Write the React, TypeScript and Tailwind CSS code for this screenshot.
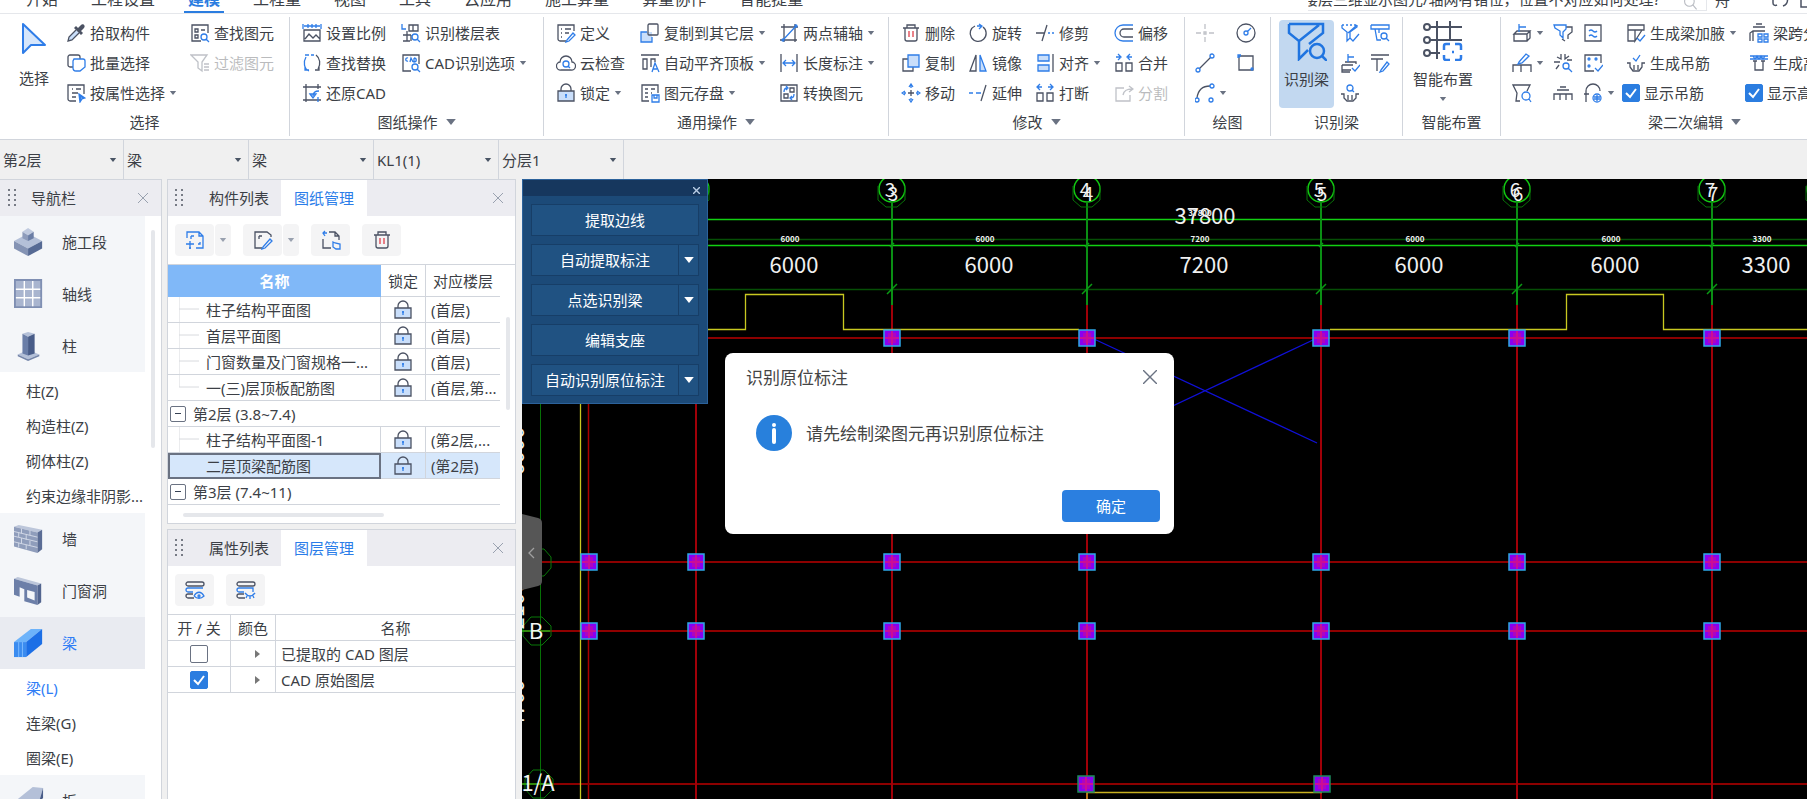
import { useState, type ReactNode } from "react"
import clsx from "clsx"

const INK = "#4b5263"
const BLUE = "#2f7de8"
const SOFT = "#c9defa"

// circle as a path, so that it can share one stroke with the lines around it
const c = (x: number, y: number, r: number) => `M${x - r} ${y}a${r} ${r} 0 1 0 ${r * 2} 0a${r} ${r} 0 1 0 ${-r * 2} 0`

type Glyph = { fill?: string; ink?: string; blue?: string; red?: string }

const glyphs: Record<string, Glyph> = {
  batch: { ink: "M7 14H4a2 2 0 0 1-2-2V4a2 2 0 0 1 2-2h8a2 2 0 0 1 2 2v2", blue: "M8 6h9a2 2 0 0 1 2 2v6l-5 4h-4a3 3 0 0 1-3-3V8z" },
  byProp: { ink: "M10 18H4a2 2 0 0 1-2-2V2h16v9M6 6h1M10 6h5M6 10h6M6 14h4", blue: "M13 11l6 4-3 1-2 3zM14 13l3 2-2 2z" },
  find: { ink: "M11 18H2V2h16v8M5 6h3v3H5zM5 12h3v3H5zM11 7h4", blue: c(14, 14, 3) + "M16 16l3 3" },
  filter: { ink: "M1 2h16l-5 7v9l-4-3V9zM14 11h5M14 14h5M14 17h5" },
  scale: { ink: "M2 7h16v11H2zM3 16l4-5 4 4 3-3 4 4", blue: "M1 1v5M19 1v5M2 3h16M6 1v4M10 1v4M14 1v4" },
  replace: { ink: "M14 2c4 3 5 9 2 14M13 17h4v-4", blue: "M7 18C2 16 1 9 4 4M7 2H3M3 14v3h4M12 2H9" },
  restore: { ink: "M1 4h18M4 1v18M1 17h18M16 1v5", blue: "M17 8c-5 0-6 2-6 5M8 11l3 4 3-4zM16 14v5" },
  floors: { ink: "M8 2h9v6H8zM12 2v6M2 12h8M6 8v10M2 18h7M10 12v6", blue: "M1 1v5h4" + c(14, 14, 3) + "M16 16l3 3" },
  cad: { ink: "M10 18H2V2h16v9", blue: "M7 5c-3-1-3 4 0 3M9 9l1-4 2 4M13 5v4c3 0 3-4 0-4" + c(14, 14, 3) + "M16 16l3 3" },
  define: { ink: "M10 18H4a2 2 0 0 1-2-2V2h16v6M5 6h1M9 6h6M5 10h1M9 10h4M5 14h1", blue: "M11 17l6-7 2 2-6 6-3 1z" },
  cloud: { ink: "M5 17a4 4 0 0 1-1-8 6 6 0 0 1 12 0 4 4 0 0 1-1 8z", blue: c(10, 11, 3) + "M12 13l2 2" },
  lock: { fill: "M2 8h16v10H2z", ink: "M2 8h16v10H2zM5 8V6a5 5 0 0 1 10 0v2", blue: "M10 11v4M9 12h2" },
  copyFloor: { fill: "M1 9h11v10H1z", blue: "M7 9H1v10h11v-5", ink: "M9 1h8a1 1 0 0 1 1 1v9a1 1 0 0 1-1 1H9a1 1 0 0 1-1-1V2z" },
  alignTop: { ink: "M1 2h18M3 6h4v10H3zM11 14V6h4v3", blue: "M12 19l3-9 4 9M13 16h4" },
  save: { ink: "M9 18H2V2h16v8M5 6h3M11 6h4M5 10h3M5 14h3M11 10h1", blue: "M12 12h7v7h-7zM14 12v3h3v-3" },
  twoPoint: { ink: "M5 1v18M16 1v18M2 4h17M1 17h17", blue: "M4 17L17 3" + c(17, 3, 1) + c(4, 17, 1) },
  length: { ink: "M2 1v18M18 1v18", blue: "M4 10h12M7 7l-3 3 3 3M13 7l3 3-3 3" },
  convert: { ink: "M2 2h16v16H2zM11 5h4v4h-4zM5 11h4v4H5z", blue: "M5 9c0-3 1-4 3-4M7 3l2 2-2 2M15 11c0 3-1 4-3 4M13 13l-2 2 2 2" },
  trash: { ink: "M2 5h16M4 5v11a2 2 0 0 0 2 2h8a2 2 0 0 0 2-2V5M6 5V2h8v3", red: "M8 8v6M12 8v6" },
  copy: { ink: "M7 6H2v12h10v-4", fill: "M7 2h11v12H7z", blue: "M7 2h11v12H7z" },
  move: { ink: "M10 7v6M7 10h6", blue: "M8 4l2-3 2 3M8 16l2 3 2-3M4 8l-3 2 3 2M16 8l3 2-3 2M10 3v2M10 15v2M3 10h2M15 10h2" },
  rotate: { ink: "M7 3a8 8 0 1 0 8 1", blue: "M11 1l3 2-3 3M9 3h4" },
  mirror: { ink: "M8 2v16H2z", fill: "M12 2v16h6z", blue: "M12 2v16h6z" },
  extend: { ink: "M18 2l-5 16", blue: "M1 10h4M8 10h5" },
  trim: { ink: "M12 2L7 18M1 10h9", blue: "M13 10h2M17 10h2" },
  align: { fill: "M3 2h11v6H3zM3 12h11v6H3z", blue: "M3 2h11v6H3zM3 12h11v6H3z", ink: "M18 1v18" },
  breakUp: { ink: "M2 10h6v8H2zM12 10h6v8h-6z", blue: "M3 4h4M5 1L2 4l3 3M13 4h4M15 1l3 3-3 3" },
  offset: { blue: "M19 2H9a8 8 0 0 0 0 16h10", ink: "M19 6h-9a4 4 0 0 0 0 8h9" },
  merge: { ink: "M2 10h6v8H2zM12 10h6v8h-6z", blue: "M2 4h4M4 1l3 3-3 3M14 4h4M16 1l-3 3 3 3" },
  split: { ink: "M10 5H2v13h14v-6M9 12c1-5 4-6 9-6M15 3l4 3-4 3" },
  point: { ink: "M10 1v5M10 14v5M1 10h5M14 10h5M9 9h2v2H9z" },
  circle: { ink: c(10, 10, 9), blue: c(10, 10, 2) + "M11 9l4-4" },
  line: { ink: "M4 16L16 4", blue: c(3, 17, 2) + c(17, 3, 2) },
  rect: { ink: "M3 3h14v14H3z", blue: "M2 5V2h3" + c(16, 16, 1) + c(3, 3, 1) },
  arc: { ink: "M2 15C3 7 8 3 15 3", blue: c(17, 3, 2) + c(2, 17, 2) + c(16, 17, 2) },
  beamCheck: { blue: "M2 2h2M6 2h2M10 2h2M14 2h2M2 2v3l5 4v9l3-3V9l7-5V2M17 2L8 10M10 15l3 3 6-7" },
  beamFind: { blue: "M1 2h18v4H5l2 11h4M1 2v4h4M9 6v4" + c(14, 13, 3) + "M16 15l3 3" },
  levelCheck: { ink: "M2 12h11M2 12v5h9M5 9h11v2M2 17v2h8", blue: "M8 1v8M8 4h6M12 15l3 3 5-6" },
  sectionEdit: { ink: "M1 2h18M1 6h12M7 6v12", blue: "M11 17l6-8 2 2-6 7-3 1z" },
  hangFind: { ink: "M1 11h3v4l3 3h6l3-3v-4h3M8 12v5M12 12v5", blue: c(10, 5, 3) + "M12 7l2 2" },
  level: { ink: "M2 11l3-3h13l-3 3zM2 11v7h13v-7M18 8v7l-3 3", blue: "M7 1v8M7 4h7" },
  penBeam: { ink: "M1 19v-7h18v7M9 12v7", blue: "M7 9l7-8 3 2-7 7-4 1z" },
  cutFind: { ink: "M8 18H4l1-8-4-8h17l-3 6", blue: c(14, 13, 4) + "M17 16l2 3" },
  twoBeam: { blue: "M1 2h12v4l-3 3v6l-3-3V8L2 5z", ink: "M13 4h6v5l-4 3v4M9 16l3 2" },
  explode: { ink: "M8 1v5L4 4M1 9h6M12 1v5l4-3M14 7h5M6 12l-3 4", blue: c(13, 13, 3) + "M15 15l4 4" },
  roof: { ink: "M1 17v-6h18v6M7 11v6M13 11v6M4 7h12M7 4h6" },
  equalBox: { ink: "M2 2h16v16H2z", blue: "M6 8q2-2 4 0t4 0M6 13q2-2 4 0t4 0" },
  dots: { ink: "M11 18H2V2h16v8", blue: c(6, 6, 1) + c(13, 6, 1) + c(6, 13, 1) + "M12 15l3 3 5-6" },
  headset: { ink: "M3 11V8a7 7 0 0 1 14 0M1 11h5M3 11v8", blue: c(14, 15, 4) + "M11 14h6M11 16h6M14 12v6" },
  haunch: { ink: "M2 2h16v5H2zM2 2v16h7M9 7v11l7-11", blue: "M11 15l3 3 5-6" },
  hang: { ink: "M1 10h3v4l3 4h6l3-4v-4h3M8 12v5M12 12v5", blue: "M7 5l3 3 4-6" },
  spans: { ink: "M1 18v-8l3-2h12M4 4h12M7 1h6M4 8v10", blue: "M9 11h4v3H9zM15 11h4v3h-4zM9 16h4v3H9zM15 16h4v3h-4z" },
  raised: { blue: "M1 3h18M1 6h18M4 3l2 3 2-3 2 3 2-3 2 3 2-3", ink: "M6 8v9h8V8M4 8h4M12 8h4" },
  newSheet: { blue: "M6 18H4M2 8V2h12l4 4v12h-7M14 2v4h4M6 6h3M6 6v3M13 14h2v-2M1 14h8M5 11v8" },
  editSheet: { ink: "M9 18H2V2h12l4 3v2M6 6v3M6 6h3", blue: "M10 17l7-8 2 2-7 7-3 1z" },
  moveSheet: { ink: "M2 9v9h8M8 2h6l4 4v4M14 2v4h4", blue: "M4 1L2 3l2 3M2 3h4M12 12v5l3 2h4v-5l-5-1z" },
  layerOn: { ink: "M3 2h14a1 1 0 0 1 0 4H3a1 1 0 0 1 0-4M9 18H3a1 1 0 0 1 0-4h5", blue: "M8 12H3a1 1 0 0 1 0-4h15M9 16c3-5 7-5 10 0-3 3-7 3-10 0" + c(14, 16, 1) },
  layerOff: { ink: "M3 2h14a1 1 0 0 1 0 4H3a1 1 0 0 1 0-4M9 18H3a1 1 0 0 1 0-4h5", blue: "M8 12H3a1 1 0 0 1 0-4h14v4M9 13c3 4 7 4 10 0M11 16l-1 2M14 16v3M17 16l1 2" },
  search: { ink: c(8, 8, 6) + "M12 12l5 6" },
}

function Icon({ name, className = "h-5 w-5" }: { name: string; className?: string }) {
  if (name === "picker") {
    return (
      <svg viewBox="0 0 20 20" className={clsx(className, "shrink-0")} aria-hidden="true">
        <path d="M10 7L3 14l-1 4 4-1 7-7" fill={SOFT} stroke={INK} strokeWidth="1.300" />
        <path d="M8 5l7 7 2-2-2-2 3-3c2-2-1-5-3-3l-3 3-2-2z" fill={INK} />
      </svg>
    )
  }
  const g = glyphs[name]
  return (
    <svg viewBox="0 0 20 20" fill="none" strokeWidth="1.300" className={clsx(className, "shrink-0")} aria-hidden="true">
      {g.fill && <path d={g.fill} fill={SOFT} />}
      {g.ink && <path d={g.ink} stroke={INK} />}
      {g.blue && <path d={g.blue} stroke={BLUE} />}
      {g.red && <path d={g.red} stroke="#e0404c" />}
    </svg>
  )
}

function Caret({ className = "text-gray-500", large }: { className?: string; large?: boolean }) {
  return (
    <svg viewBox="0 0 8 5" className={clsx("shrink-0", large ? "h-[6px] w-[10px]" : "h-1 w-2", className)} aria-hidden="true">
      <path d="M0 0h8L4 5z" fill="currentColor" />
    </svg>
  )
}

function Cross({ className, bold }: { className: string; bold?: boolean }) {
  return (
    <svg viewBox="0 0 10 10" className={className} aria-hidden="true">
      <path d="M0 0l10 10M10 0L0 10" stroke="currentColor" strokeWidth={bold ? 2 : 1} />
    </svg>
  )
}

function CheckBox({ id, label, checked = false }: { id: string; label: string; checked?: boolean }) {
  const [on, setOn] = useState(checked)
  return (
    <span className="relative block h-[18px] w-[18px] shrink-0">
      <input
        id={id}
        type="checkbox"
        aria-label={label}
        checked={on}
        onChange={() => setOn(!on)}
        className="block h-[18px] w-[18px] appearance-none rounded-xs border border-gray-500 bg-white checked:border-[#2b7de0] checked:bg-[#2b7de0]"
      />
      {on && (
        <svg viewBox="0 0 18 18" className="pointer-events-none absolute inset-0" aria-hidden="true">
          <path d="M4 9l4 4 6-8" fill="none" stroke="white" strokeWidth="2" />
        </svg>
      )}
    </span>
  )
}

type ToolDef = { icon: string; text?: string; menu?: boolean; off?: boolean; check?: boolean }

function Tool({ icon, text, menu, off, check }: ToolDef) {
  if (check) {
    return (
      <label htmlFor={icon} className="-ml-1 flex h-[30px] items-center gap-1 whitespace-nowrap">
        <CheckBox id={icon} label={text ?? ""} checked />
        {text}
      </label>
    )
  }
  return (
    <button disabled={off} aria-label={text ?? icon} className={clsx("flex h-[30px] items-center gap-1 whitespace-nowrap", off && "opacity-35")}>
      <Icon name={icon} />
      {text}
      {menu && <Caret />}
    </button>
  )
}

function Column({ tools, className }: { tools: ToolDef[]; className?: string }) {
  return (
    <div className={clsx("flex shrink-0 flex-col items-start", className)}>
      {tools.map((t) => (
        <Tool key={t.icon} {...t} />
      ))}
    </div>
  )
}

type GroupProps = { title: string; menu?: boolean; className: string; inset: string; children: ReactNode }

function Group({ title, menu, className, inset, children }: GroupProps) {
  return (
    <section className={clsx("my-[3px] flex shrink-0 flex-col border-r border-gray-300", className)}>
      <div className={clsx("flex h-[91px] pt-px", inset)}>{children}</div>
      <div className="flex h-7 items-center justify-center gap-2">
        {title}
        {menu && <Caret large />}
      </div>
    </section>
  )
}

const tabs = ["开始", "工程设置", "建模", "工程量", "视图", "工具", "云应用", "施工算量", "算量协作", "智能提量"]

function TopBar() {
  return (
    <header className="flex h-[14px] shrink-0 items-end overflow-hidden border-b border-gray-200 pl-[26px]">
      <nav className="flex gap-[33px] text-[16px]">
        {tabs.map((t) => (
          <a key={t} href="#" className={clsx("relative block pb-[2px] leading-6 whitespace-nowrap", t === "建模" && "font-bold text-[#2b7de0]")}>
            {t}
            {t === "建模" && <span className="absolute -inset-x-1 bottom-0 h-[2px] bg-[#2b7de0]" />}
          </a>
        ))}
      </nav>
      <div className="ml-auto flex w-[499px] shrink-0 items-end gap-2">
        <div className="relative mb-[2px] w-[399px]">
          <input
            aria-label="搜索"
            defaultValue="楼层三维显示图元/轴网有错位，位置不对应如何处理?"
            className="block h-[25px] w-full -indent-[5px] border-r border-b border-gray-200 pr-10 outline-none"
          />
          <span className="absolute right-2 bottom-0 opacity-40">
            <Icon name="search" className="h-4 w-4" />
          </span>
        </div>
        <span className="pb-px leading-6">舟</span>
        <svg viewBox="0 0 40 14" className="mb-1 ml-auto h-[14px] w-10" fill="none" stroke={INK} strokeWidth="1.500" aria-hidden="true">
          <path d="M6 2v6c0 2 2 3 4 2M16 1c6 0 6 8 0 10M40 12h-6V1" />
        </svg>
      </div>
    </header>
  )
}

function Ribbon() {
  return (
    <div className="flex shrink-0 overflow-hidden border-b border-gray-300">
      <Group title="选择" className="w-[290px]" inset="pl-[10px]">
        <button className="mr-2 flex w-12 flex-col items-center gap-3">
          <svg viewBox="0 0 26 34" className="mt-1 h-[34px] w-[26px]" aria-hidden="true">
            <path d="M2 2v29l8-8h14z" fill="#d6e6fb" stroke={BLUE} strokeWidth="2" strokeLinejoin="round" />
          </svg>
          选择
        </button>
        <Column className="w-[124px]" tools={[{ icon: "picker", text: "拾取构件" }, { icon: "batch", text: "批量选择" }, { icon: "byProp", text: "按属性选择", menu: true }]} />
        <Column tools={[{ icon: "find", text: "查找图元" }, { icon: "filter", text: "过滤图元", off: true }]} />
      </Group>
      <Group title="图纸操作" menu className="w-[254px]" inset="pl-3">
        <Column className="w-[99px]" tools={[{ icon: "scale", text: "设置比例" }, { icon: "replace", text: "查找替换" }, { icon: "restore", text: "还原CAD" }]} />
        <Column tools={[{ icon: "floors", text: "识别楼层表" }, { icon: "cad", text: "CAD识别选项", menu: true }]} />
      </Group>
      <Group title="通用操作" menu className="w-[345px]" inset="pl-3">
        <Column className="w-[84px]" tools={[{ icon: "define", text: "定义" }, { icon: "cloud", text: "云检查" }, { icon: "lock", text: "锁定", menu: true }]} />
        <Column
          className="w-[139px]"
          tools={[{ icon: "copyFloor", text: "复制到其它层", menu: true }, { icon: "alignTop", text: "自动平齐顶板", menu: true }, { icon: "save", text: "图元存盘", menu: true }]}
        />
        <Column tools={[{ icon: "twoPoint", text: "两点辅轴", menu: true }, { icon: "length", text: "长度标注", menu: true }, { icon: "convert", text: "转换图元" }]} />
      </Group>
      <Group title="修改" menu className="w-[296px]" inset="pl-3">
        <Column className="w-[67px]" tools={[{ icon: "trash", text: "删除" }, { icon: "copy", text: "复制" }, { icon: "move", text: "移动" }]} />
        <Column className="w-[67px]" tools={[{ icon: "rotate", text: "旋转" }, { icon: "mirror", text: "镜像" }, { icon: "extend", text: "延伸" }]} />
        <Column className="w-[79px]" tools={[{ icon: "trim", text: "修剪" }, { icon: "align", text: "对齐", menu: true }, { icon: "breakUp", text: "打断" }]} />
        <Column tools={[{ icon: "offset", text: "偏移" }, { icon: "merge", text: "合并" }, { icon: "split", text: "分割", off: true }]} />
      </Group>
      <Group title="绘图" className="w-[86px]" inset="pl-[10px]">
        <Column className="w-[41px]" tools={[{ icon: "point", off: true }, { icon: "line" }, { icon: "arc", menu: true }]} />
        <Column tools={[{ icon: "circle" }, { icon: "rect" }]} />
      </Group>
      <Group title="识别梁" className="w-[132px]" inset="pl-2">
        <button className="mt-[2px] mr-[6px] flex h-[88px] w-[55px] shrink-0 flex-col items-center gap-2 rounded bg-[#c2d8f0]">
          <svg viewBox="0 0 40 40" className="mt-px h-10 w-10" fill="none" stroke="#1f74e0" strokeWidth="2.500" aria-hidden="true">
            <path d="M2 3h34v9L22 23M2 3v9l10 8v18l9-9M12 20L32 4" />
            <circle cx="30" cy="30" r="7" fill="#c2d8f0" />
            <path d="M35 35l5 5" />
          </svg>
          识别梁
        </button>
        <Column className="w-[30px]" tools={[{ icon: "beamCheck" }, { icon: "levelCheck" }, { icon: "hangFind" }]} />
        <Column tools={[{ icon: "beamFind" }, { icon: "sectionEdit" }]} />
      </Group>
      <Group title="智能布置" className="w-[98px]" inset="pl-[6px]">
        <button className="flex w-[68px] flex-col items-center gap-2">
          <svg viewBox="0 0 40 40" className="mt-[3px] h-10 w-10" fill="none" stroke={INK} strokeWidth="2" aria-hidden="true">
            <path d="M6 6h33M6 19h33M6 32h11M14 0v38M27 0v19" />
            <circle cx="4" cy="6" r="3" fill="white" />
            <circle cx="4" cy="19" r="3" fill="white" />
            <circle cx="4" cy="32" r="3" fill="white" />
            <path d="M21 29v-4q0-2 2-2h4M32 23h4q2 0 2 2v4M38 34v3q0 2-2 2h-4M27 39h-4q-2 0-2-2v-3M29 31h2" stroke={BLUE} strokeWidth="2.500" />
          </svg>
          <span className="whitespace-nowrap">智能布置</span>
          <Caret />
        </button>
      </Group>
      <Group title="梁二次编辑" menu className="w-[388px]" inset="pl-[11px]">
        <Column className="w-[41px]" tools={[{ icon: "level", menu: true }, { icon: "penBeam", menu: true }, { icon: "cutFind" }]} />
        <Column className="w-[30px]" tools={[{ icon: "twoBeam" }, { icon: "explode" }, { icon: "roof" }]} />
        <Column className="w-[43px]" tools={[{ icon: "equalBox" }, { icon: "dots" }, { icon: "headset", menu: true }]} />
        <Column className="w-[123px]" tools={[{ icon: "haunch", text: "生成梁加腋", menu: true }, { icon: "hang", text: "生成吊筋" }, { icon: "show-hang", text: "显示吊筋", check: true }]} />
        <Column tools={[{ icon: "spans", text: "梁跨分类" }, { icon: "raised", text: "生成高强节点" }, { icon: "show-raised", text: "显示高强节点", check: true }]} />
      </Group>
    </div>
  )
}

const filters = [
  { label: "楼层", value: "第2层" },
  { label: "构件大类", value: "梁" },
  { label: "构件类型", value: "梁" },
  { label: "构件", value: "KL1(1)" },
  { label: "分层", value: "分层1" },
]

function FilterBar() {
  return (
    <div className="flex h-[39px] shrink-0 bg-[#f0f0f0]">
      {filters.map((f, i) => (
        <div key={f.label} className={clsx("relative border-r border-gray-300", i === 0 ? "w-[124px]" : "w-[125px]")}>
          <select aria-label={f.label} className="h-full w-full appearance-none pl-[3px] outline-none">
            <option>{f.value}</option>
          </select>
          <Caret className="pointer-events-none absolute top-[18px] right-[6px] text-gray-600" />
        </div>
      ))}
    </div>
  )
}

function Grip() {
  return (
    <svg viewBox="0 0 8 18" className="h-[18px] w-2" fill="#777b85" aria-hidden="true">
      {[0, 5, 10, 15].map((y) => (
        <path key={y} d={`M0 ${y}h2v2H0zM6 ${y}h2v2H6z`} />
      ))}
    </svg>
  )
}

// steel-blue solids used by the component tree
const solids: Record<string, ReactNode> = {
  stage: (
    <>
      <path d="M0 15L15 7l15 8-15 8z" fill="#b4c0d8" />
      <path d="M0 15l15 8v8L0 23z" fill="#8493b4" />
      <path d="M30 15l-15 8v8l15-8z" fill="#566a94" />
      <path d="M9 5l6-4 6 4-6 4z" fill="#c0cadf" />
      <path d="M9 5l6 4v6l-6-3z" fill="#8d9bbb" />
      <path d="M21 5l-6 4v6l6-3z" fill="#6a7da5" />
    </>
  ),
  axis: (
    <>
      <path d="M1 1h28v29H1z" fill="#a9b5cf" stroke="#7f8fb3" strokeWidth="2" />
      <path d="M11 2v27M20 2v27M2 11h26M2 20h26" stroke="white" strokeWidth="1.500" />
    </>
  ),
  column: (
    <>
      <path d="M4 25l11-5 12 5-12 5z" fill="#b4c0d8" />
      <path d="M4 25l11 5v2L4 27zM27 25l-12 5v2l12-5z" fill="#7485a9" />
      <path d="M9 3l6-2 7 2-7 3z" fill="#b4c0d8" />
      <path d="M9 3l6 3v20l-6-2z" fill="#6a7ea8" />
      <path d="M22 3l-7 3v20l7-2z" fill="#485c88" />
    </>
  ),
  wall: (
    <>
      <path d="M0 3l5-2 25 5-5 3z" fill="#bcc6da" />
      <path d="M0 3l25 6v22L0 24z" fill="#8f9dbb" />
      <path d="M30 6l-5 3v22l5-4z" fill="#5b6d95" />
      <path d="M0 8l25 6M0 13l25 6M0 19l25 6M8 5v5M17 7v5M5 9v5M13 11v6M8 15v6M17 18v5M5 20v5M13 22v5" stroke="#d3dae8" />
    </>
  ),
  opening: (
    <>
      <path d="M0 3l4-2 25 7-4 2z" fill="#bcc6da" />
      <path d="M0 3l25 7v21l-14-4V14l-5-2v10l-6-2zM14 15v8l8 3v-9z" fill="#6c7fa8" fillRule="evenodd" />
      <path d="M29 8l-4 2v21l4-3z" fill="#52658f" />
    </>
  ),
  beam: (
    <>
      <path d="M0 15L18 1h12L13 15z" fill="#6db3fa" />
      <path d="M0 15h13v16H0z" fill="#3b8cf0" />
      <path d="M30 1L13 15v16l17-14z" fill="#1c6fe6" />
      <path d="M5 15v16M9 15v16" stroke="#7fbcff" />
    </>
  ),
  slab: (
    <>
      <path d="M4 14L20 1l11 1-4 14z" fill="#b4c0d8" />
      <path d="M4 14l23 2v6L4 20z" fill="#8493b4" />
      <path d="M31 2l-4 14v6l4-10z" fill="#485c88" />
    </>
  ),
}

function NavItem({ icon, text, active }: { icon: string; text: string; active?: boolean }) {
  return (
    <a href="#" className={clsx("flex h-[52px] items-center gap-[18px] pl-[14px]", active ? "bg-[#e9ebf1] text-[#2f7df6]" : "bg-[#f4f6f9]")}>
      <svg viewBox="0 0 32 32" className="h-8 w-[30px]" aria-hidden="true">
        {solids[icon]}
      </svg>
      {text}
    </a>
  )
}

function SubItems({ items, active }: { items: string[]; active?: string }) {
  return (
    <div className="pt-px">
      {items.map((s) => (
        <a key={s} href="#" className={clsx("flex h-[35px] items-center pl-[26px] whitespace-nowrap", s === active && "text-[#2f7df6]")}>
          {s}
        </a>
      ))}
    </div>
  )
}

function NavPanel() {
  return (
    <aside className="flex w-[162px] shrink-0 flex-col border-t border-r border-gray-300 bg-white">
      <div className="flex h-9 shrink-0 items-center bg-[#ececf1] pr-[13px] pl-2">
        <Grip />
        <h2 className="ml-[15px]">导航栏</h2>
        <button aria-label="关闭导航栏" className="ml-auto text-gray-400">
          <Cross className="h-[10px] w-[10px]" />
        </button>
      </div>
      <div className="flex min-h-0 flex-1 overflow-hidden">
        <nav className="w-[145px] shrink-0">
          <NavItem icon="stage" text="施工段" />
          <NavItem icon="axis" text="轴线" />
          <NavItem icon="column" text="柱" />
          <SubItems items={["柱(Z)", "构造柱(Z)", "砌体柱(Z)", "约束边缘非阴影..."]} />
          <NavItem icon="wall" text="墙" />
          <NavItem icon="opening" text="门窗洞" />
          <NavItem icon="beam" text="梁" active />
          <SubItems items={["梁(L)", "连梁(G)", "圈梁(E)"]} active="梁(L)" />
          <NavItem icon="slab" text="板" />
        </nav>
        <div className="mt-[14px] ml-[6px] h-[218px] w-1 rounded-full bg-gray-200" />
      </div>
    </aside>
  )
}

function PanelTabs({ items }: { items: [string, string] }) {
  return (
    <div className="flex h-9 shrink-0 items-center bg-[#ececf1] pr-3 pl-[7px]">
      <Grip />
      <div role="tablist" className="ml-[14px] flex h-full">
        <button role="tab" aria-selected="false" className="w-[84px]">
          {items[0]}
        </button>
        <button role="tab" aria-selected="true" className="w-[86px] bg-white text-[#2b7de9]">
          {items[1]}
        </button>
      </div>
      <button aria-label="关闭面板" className="ml-auto text-gray-400">
        <Cross className="h-[10px] w-[10px]" />
      </button>
    </div>
  )
}

function PanelButton({ icon, label, menu }: { icon: string; label: string; menu?: boolean }) {
  return (
    <span className="flex gap-px">
      <button aria-label={label} className="flex h-8 w-[39px] items-center justify-center rounded bg-[#f4f4f5]">
        <Icon name={icon} />
      </button>
      {menu && (
        <button aria-label={label + "菜单"} className="flex h-8 w-4 items-center justify-center rounded bg-[#f4f4f5]">
          <Caret className="text-gray-400" />
        </button>
      )}
    </span>
  )
}

type Sheet = { name: string; floor?: string; active?: boolean; last?: boolean }

const sheets: Sheet[] = [
  { name: "柱子结构平面图", floor: "(首层)" },
  { name: "首层平面图", floor: "(首层)" },
  { name: "门窗数量及门窗规格一...", floor: "(首层)" },
  { name: "一(三)层顶板配筋图", floor: "(首层,第...", last: true },
  { name: "第2层 (3.8~7.4)" },
  { name: "柱子结构平面图-1", floor: "(第2层,..." },
  { name: "二层顶梁配筋图", floor: "(第2层)", active: true },
  { name: "第3层 (7.4~11)" },
]

function SheetRow({ sheet }: { sheet: Sheet }) {
  if (!sheet.floor) {
    return (
      <tr>
        <td colSpan={3} className="h-[26px] border-b border-gray-300 p-0">
          <div className="flex items-center gap-[7px] pl-[2px]">
            <button aria-label={"折叠" + sheet.name} className="flex h-4 w-4 items-center justify-center rounded-xs border border-gray-500">
              <span className="h-px w-[6px] bg-gray-700" />
            </button>
            {sheet.name}
          </div>
        </td>
      </tr>
    )
  }
  return (
    <tr className={sheet.active ? "bg-[#d6e7fb]" : undefined}>
      <td className={clsx("h-[26px] p-0", sheet.active ? "border-2 border-gray-500" : "border-r border-b border-gray-300")}>
        <div className={clsx("flex items-center whitespace-nowrap", sheet.active ? "pl-9" : "pl-[11px]")}>
          {!sheet.active && (
            <svg viewBox="0 0 20 25" className="mr-[7px] h-[25px] w-5" fill="none" stroke="#d8dade" aria-hidden="true">
              <path d={sheet.last ? "M0 0V12H20" : "M0 0V25M0 12H20"} />
            </svg>
          )}
          {sheet.name}
        </div>
      </td>
      <td className="border-r border-b border-gray-300 p-0">
        <Icon name="lock" className="mx-auto block h-5 w-5" />
      </td>
      <td className="border-b border-gray-300 p-0 pl-[5px] whitespace-nowrap">{sheet.floor}</td>
    </tr>
  )
}

function DrawingPanel() {
  return (
    <section className="flex h-[345px] shrink-0 flex-col border border-gray-300 bg-white">
      <PanelTabs items={["构件列表", "图纸管理"]} />
      <div className="flex h-12 shrink-0 items-center gap-3 pl-[7px]">
        <PanelButton icon="newSheet" label="添加图纸" menu />
        <PanelButton icon="editSheet" label="编辑图纸" menu />
        <PanelButton icon="moveSheet" label="移动图纸" />
        <PanelButton icon="trash" label="删除图纸" />
      </div>
      <div className="flex border-t border-gray-300">
        <table className="w-[332px] table-fixed border-separate border-spacing-0 leading-5">
          <colgroup>
            <col className="w-[213px]" />
            <col className="w-[45px]" />
            <col className="w-[74px]" />
          </colgroup>
          <thead>
            <tr className="h-8">
              <th className="bg-[#80b8f8] p-0 text-white">名称</th>
              <th className="border-r border-b border-gray-300 p-0 font-normal">锁定</th>
              <th className="border-b border-gray-300 p-0 font-normal">对应楼层</th>
            </tr>
          </thead>
          <tbody>
            {sheets.map((s) => (
              <SheetRow key={s.name} sheet={s} />
            ))}
          </tbody>
        </table>
        <div className="mt-[52px] ml-[6px] h-[93px] w-1 rounded-full bg-gray-200" />
      </div>
      <div className="mt-2 ml-[15px] h-1 w-[201px] rounded-full bg-gray-200" />
    </section>
  )
}

const layers = [
  { id: "extracted", name: "已提取的 CAD 图层", on: false },
  { id: "original", name: "CAD 原始图层", on: true },
]

function LayerPanel() {
  return (
    <section className="flex min-h-0 flex-1 flex-col border border-b-0 border-gray-300 bg-white">
      <PanelTabs items={["属性列表", "图层管理"]} />
      <div className="flex h-12 shrink-0 items-center gap-3 pl-[7px]">
        <PanelButton icon="layerOn" label="显示图层" />
        <PanelButton icon="layerOff" label="隐藏图层" />
      </div>
      <table className="w-full table-fixed border-separate border-spacing-0 border-t border-gray-300 leading-5">
        <colgroup>
          <col className="w-[63px]" />
          <col className="w-[45px]" />
          <col />
        </colgroup>
        <thead>
          <tr className="h-[26px]">
            <th className="border-r border-b border-gray-300 p-0 font-normal">开 / 关</th>
            <th className="border-r border-b border-gray-300 p-0 font-normal">颜色</th>
            <th className="border-b border-gray-300 p-0 font-normal">名称</th>
          </tr>
        </thead>
        <tbody>
          {layers.map((l) => (
            <tr key={l.id} className="h-[26px]">
              <td className="border-r border-b border-gray-300 p-0">
                <div className="flex justify-center">
                  <CheckBox id={l.id} label={l.name} checked={l.on} />
                </div>
              </td>
              <td className="border-r border-b border-gray-300 p-0 pl-2">
                <svg viewBox="0 0 5 8" className="mx-auto block h-2 w-[5px]" aria-hidden="true">
                  <path d="M0 0l5 4-5 4z" fill="#777" />
                </svg>
              </td>
              <td className="border-b border-gray-300 p-0 pl-[5px]">
                <label htmlFor={l.id}>{l.name}</label>
              </td>
            </tr>
          ))}
        </tbody>
      </table>
    </section>
  )
}

const axes = [
  { x: 696, no: "2" },
  { x: 892, no: "3" },
  { x: 1087, no: "4" },
  { x: 1321, no: "5" },
  { x: 1517, no: "6" },
  { x: 1712, no: "7" },
  { x: 1820, no: "8" },
]
const spans = [
  { x: 794, mm: "6000" },
  { x: 989, mm: "6000" },
  { x: 1204, mm: "7200" },
  { x: 1419, mm: "6000" },
  { x: 1615, mm: "6000" },
  { x: 1766, mm: "3300" },
]

function Pillar({ x, y, edge = "#2ea8e8" }: { x: number; y: number; edge?: string }) {
  return (
    <g>
      <path d={`M${x - 8} ${y - 8}h16v16h-16z`} fill="#8a00f0" stroke={edge} strokeWidth="1.500" />
      <path d={`M${x} ${y - 7}v14M${x - 7} ${y}h14`} stroke="#c8109a" strokeWidth="2" />
      <path d={`M${x - 4} ${y - 5}h8v10h-8z`} fill="#d00a90" opacity="0.500" />
    </g>
  )
}

function Plan() {
  return (
    <svg viewBox="522 179 1285 620" preserveAspectRatio="xMinYMin slice" className="absolute inset-0 h-full w-full" fill="none" aria-label="二层顶梁配筋图">
      <path d="M522 219.500H1807M522 245.500H1807" stroke="#12d012" strokeWidth="1.500" />
      <path d="M522 239.500H1807M522 289.500H1807" stroke="#064f06" strokeWidth="1.500" />
      <path d="M540.500 400V799" stroke="#067006" />
      <path d="M588.500 337V799" stroke="#a80000" strokeWidth="1.500" />
      <path d="M522 338H1807M522 562H1807M522 784H1807" stroke="#8c0000" strokeWidth="2" />
      <path d="M522 631H1807" stroke="#c00000" strokeWidth="1.500" />
      {axes.map((a) => (
        <g key={a.no}>
          <path d={`M${a.x} 305V799`} stroke="#a00008" strokeWidth="2" />
          <path d={`M${a.x} 203V305`} stroke="#0a8f14" strokeWidth="2" />
          <path d={`M${a.x - 5} 294l10-10M${a.x - 2} 247l4-4`} stroke="#0a9a14" strokeWidth="1.500" />
          <circle cx={a.x} cy="189" r="13" stroke="#12c812" strokeWidth="1.500" />
          <path d={`M${a.x - 14} 186v14l8 7h11l8-7v-14`} stroke="#087008" />
          <g fill="#f2f2f2" textAnchor="middle" fontSize="19">
            <text x={a.x - 2} y="197">{a.no}</text>
            <text x={a.x + 1} y="201">{a.no}</text>
          </g>
        </g>
      ))}
      <path d="M580.500 329.500V799M580.500 329.500H745.500V294.500H843.500V329.500H1079M1330 329.500H1566.500V294.500H1663.500V329.500H1807" stroke="#c8c820" strokeWidth="1.300" />
      <path d="M1087 799V792.500H1322" stroke="#c8b020" strokeWidth="1.300" />
      <path d="M1094 339L1317 443M1313 340L1094 443" stroke="#1010d8" strokeWidth="1.300" />
      {spans.map((s) => (
        <g key={s.x} fill="#f0f0f0" textAnchor="middle">
          <text x={s.x} y="273" fontSize="22">{s.mm}</text>
          <text x={s.x - 4} y="242" fontSize="8" fontWeight="700">{s.mm}</text>
        </g>
      ))}
      <g fill="#f0f0f0" textAnchor="middle">
        <text x="1205" y="224" fontSize="22">37800</text>
        <text x="1200" y="216" fontSize="8" fontWeight="700">37800</text>
      </g>
      {axes.slice(0, 6).map((a) => (
        <g key={a.no}>
          <Pillar x={a.x} y={338} />
          <Pillar x={a.x} y={562} />
          <Pillar x={a.x} y={631} />
        </g>
      ))}
      <Pillar x={589} y={562} />
      <Pillar x={589} y={631} />
      <Pillar x={1086} y={784} edge="#1c8a5c" />
      <Pillar x={1322} y={784} edge="#1c8a5c" />
      <g stroke="#087808">
        <path d="M531 549h13l7 8v11l-7 8h-13M531 617h11l9 9v10l-9 9h-11l-8-9v-10zM533 770h11l9 9v10l-9 9h-11l-8-9v-10z" />
        <path d="M522 631h28M522 784h31" stroke="#10b410" strokeWidth="1.500" />
      </g>
      <g fill="#f4f4f4" textAnchor="middle" fontSize="22">
        <text x="536" y="639">B</text>
        <text x="538" y="791">1/A</text>
        <text transform="translate(524 451) rotate(-90)">6000</text>
        <text transform="translate(524 605) rotate(-90)">2100</text>
        <text transform="translate(524 704) rotate(-90)">4700</text>
      </g>
    </svg>
  )
}

const beamActions = [
  { text: "提取边线" },
  { text: "自动提取标注", menu: true },
  { text: "点选识别梁", menu: true },
  { text: "编辑支座" },
  { text: "自动识别原位标注", menu: true },
]

function BeamToolbox() {
  return (
    <div className="absolute top-0 left-0 w-[186px] border border-[#2c629b] bg-[#1c4a78] text-white">
      <div className="flex h-4 items-center justify-end bg-[#16375e] pt-1 pr-[7px]">
        <button aria-label="关闭识别梁" className="text-[#b8cce4]">
          <Cross className="h-[7px] w-[7px]" bold />
        </button>
      </div>
      <div className="flex flex-col gap-2 px-2 pt-2 pb-[7px]">
        {beamActions.map((a) => (
          <div key={a.text} className="flex h-8 border border-[#173e67] bg-[#205282]">
            <button className="flex-1">{a.text}</button>
            {a.menu && (
              <button aria-label={a.text + "菜单"} className="flex w-5 items-center justify-center border-l border-[#173e67]">
                <Caret large className="text-white" />
              </button>
            )}
          </div>
        ))}
      </div>
    </div>
  )
}

function MessageDialog() {
  return (
    <div role="dialog" aria-labelledby="dialog-title" className="absolute top-[174px] left-[203px] w-[449px] rounded-lg bg-white text-[17px] text-[#444]">
      <div className="flex h-12 items-center justify-between pr-[17px] pl-[21px]">
        <h2 id="dialog-title">识别原位标注</h2>
        <button aria-label="关闭" className="text-gray-500">
          <Cross className="h-[14px] w-[14px]" />
        </button>
      </div>
      <div className="mt-[14px] flex items-center gap-[14px] pl-[31px]">
        <svg viewBox="0 0 36 36" className="h-9 w-9" aria-hidden="true">
          <circle cx="18" cy="18" r="18" fill="#2880dc" />
          <circle cx="18" cy="10" r="2" fill="white" />
          <path d="M18 15v12" stroke="white" strokeWidth="4" strokeLinecap="round" />
        </svg>
        <p>请先绘制梁图元再识别原位标注</p>
      </div>
      <div className="mt-[39px] flex justify-end pr-[14px] pb-3">
        <button className="h-8 w-[98px] rounded bg-[#2b7fe0] text-[15px] text-white">确定</button>
      </div>
    </div>
  )
}

function CadCanvas() {
  return (
    <main className="relative min-w-0 flex-1 overflow-hidden bg-black font-['Noto_Sans_CJK_SC',sans-serif]">
      <Plan />
      <button aria-label="收起面板" className="absolute top-[335px] left-0 h-[76px] w-5">
        <svg viewBox="0 0 20 76" className="h-full w-full" aria-hidden="true">
          <path d="M0 0l16 4q4 1 4 5v58q0 4-4 5L0 76z" fill="#565656" />
          <path d="M12 34l-5 5 5 5" fill="none" stroke="#a0a0a0" strokeWidth="1.300" />
        </svg>
      </button>
      <BeamToolbox />
      <MessageDialog />
    </main>
  )
}

export default function App() {
  return (
    <div className="flex h-screen flex-col overflow-hidden bg-white font-['Noto_Sans','Noto_Sans_CJK_SC',sans-serif] text-[15px] leading-5 text-[#3c3f46]">
      <TopBar />
      <Ribbon />
      <FilterBar />
      <div className="flex min-h-0 flex-1 bg-[#f0f0f0]">
        <NavPanel />
        <div className="mr-[6px] ml-[5px] flex w-[349px] shrink-0 flex-col gap-[5px]">
          <DrawingPanel />
          <LayerPanel />
        </div>
        <CadCanvas />
      </div>
    </div>
  )
}
